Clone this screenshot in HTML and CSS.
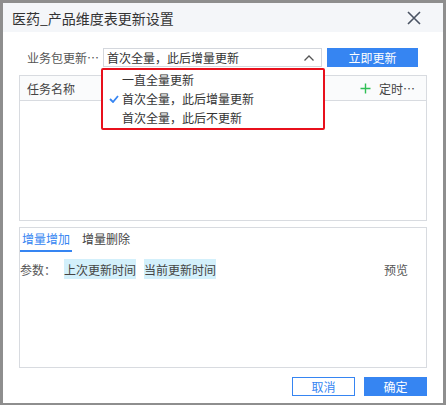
FILE: index.html
```html
<!DOCTYPE html>
<html>
<head>
<meta charset="utf-8">
<link rel="stylesheet" href="styles.css">
</head>
<body>
<div class="dialog">
  <div class="header">
    <span class="title">医药_产品维度表更新设置</span>
    <svg class="close" width="14" height="14" viewBox="0 0 14 14"><path d="M1 1 L13 13 M13 1 L1 13" stroke="#4a5363" stroke-width="1.6" fill="none"/></svg>
  </div>
  <div class="content">
    <div class="row">
      <span class="label">业务包更新…</span>
      <div class="select">
        <span>首次全量，此后增量更新</span>
        <svg width="12" height="8" viewBox="0 0 12 8"><path d="M1.5 6.5 L6 2 L10.5 6.5" stroke="#555" stroke-width="1.3" fill="none"/></svg>
      </div>
      <div class="btn-primary now">立即更新</div>
    </div>
    <div class="table">
      <div class="thead">
        <span>任务名称</span>
        <span class="timer"><svg width="11" height="11" viewBox="0 0 11 11"><path d="M5.5 0.5 V10.5 M0.5 5.5 H10.5" stroke="#2fbf55" stroke-width="1.4"/></svg>定时…</span>
      </div>
    </div>
    <div class="panel">
      <div class="tabs">
        <span class="tab active">增量增加</span>
        <span class="tab">增量删除</span>
      </div>
      <div class="params">
        <span class="plabel">参数：</span>
        <span class="chip">上次更新时间</span>
        <span class="chip">当前更新时间</span>
        <span class="preview">预览</span>
      </div>
    </div>
    <div class="footer">
      <div class="btn-outline">取消</div>
      <div class="btn-primary ok">确定</div>
    </div>
  </div>
  <div class="dropdown">
    <div class="opt">一直全量更新</div>
    <div class="opt sel"><svg class="check" width="10" height="8" viewBox="0 0 10 8"><path d="M1 4 L4 7 L9 1" stroke="#3685f2" stroke-width="1.8" fill="none"/></svg>首次全量，此后增量更新</div>
    <div class="opt">首次全量，此后不更新</div>
  </div>
</div>
</body>
</html>
```
FILE: styles.css
```css
* { box-sizing: border-box; }
html, body { margin: 0; padding: 0; }
body {
  background: #8e8e8e;
  width: 446px;
  height: 405px;
  overflow: hidden;
  font-family: "Noto Sans CJK SC", "Noto Sans", sans-serif;
  font-size: 12px;
  color: #444;
}
.dialog {
  position: relative;
  margin: 3px 0 0 3px;
  width: 440px;
  height: 400px;
  background: #fff;
}
.header {
  height: 29px;
  background: #f4f6f9;
  display: flex;
  align-items: center;
  justify-content: space-between;
  padding: 0 22px 0 9px;
}
.title { font-size: 14px; color: #333; }
.close { display: block; }
.content { padding: 16px 16px 0 16px; }
.row {
  display: flex;
  align-items: center;
  height: 19px;
  padding-left: 8px;
}
.label { width: 76px; color: #555; }
.select {
  width: 219px;
  height: 19px;
  border: 1px solid #d4d7dd;
  display: flex;
  align-items: center;
  justify-content: space-between;
  padding: 0 6px 0 3px;
  color: #333;
}
.btn-primary {
  background: #3685f2;
  color: #fff;
  display: flex;
  align-items: center;
  justify-content: center;
}
.now { width: 91px; height: 19px; margin-left: 5px; }
.table {
  margin-top: 8px;
  height: 146px;
  border: 1px solid #d8dbe0;
}
.thead {
  height: 25px;
  border-bottom: 1px solid #d8dbe0;
  background: #fafbfc;
  display: flex;
  align-items: center;
  justify-content: space-between;
  padding: 0 11px 0 7px;
  color: #444;
}
.timer { display: flex; align-items: center; gap: 8px; }
.panel {
  margin-top: 6px;
  height: 141px;
  border: 1px solid #d8dbe0;
  padding: 0;
}
.tabs { display: flex; height: 24px; align-items: flex-end; gap: 8px; }
.tab { padding: 0 2px 3px 2px; color: #444; border-bottom: 2px solid transparent; }
.tab.active { color: #3685f2; border-bottom-color: #3685f2; }
.params {
  display: flex;
  align-items: center;
  margin-top: 7px;
  height: 20px;
}
.plabel { width: 44px; color: #555; }
.chip {
  background: #d3f0fb;
  height: 20px;
  padding: 0;
  display: flex;
  align-items: center;
  color: #444;
  margin-right: 8px;
}
.preview { margin-left: auto; margin-right: 18px; color: #555; }
.footer {
  display: flex;
  justify-content: flex-end;
  gap: 9px;
  margin-top: 9px;
}
.btn-outline {
  width: 63px;
  height: 19px;
  border: 1px solid #3685f2;
  color: #3685f2;
  display: flex;
  align-items: center;
  justify-content: center;
}
.ok { width: 63px; height: 19px; }
.dropdown {
  position: absolute;
  left: 98px;
  top: 65px;
  width: 224px;
  height: 62px;
  border: 2px solid #e8101c;
  border-radius: 2px;
  background: #fff;
  padding-top: 0;
}
.opt {
  position: relative;
  height: 19px;
  line-height: 19px;
  padding-left: 19px;
  color: #333;
}
.check { position: absolute; left: 6px; top: 6px; }
```
